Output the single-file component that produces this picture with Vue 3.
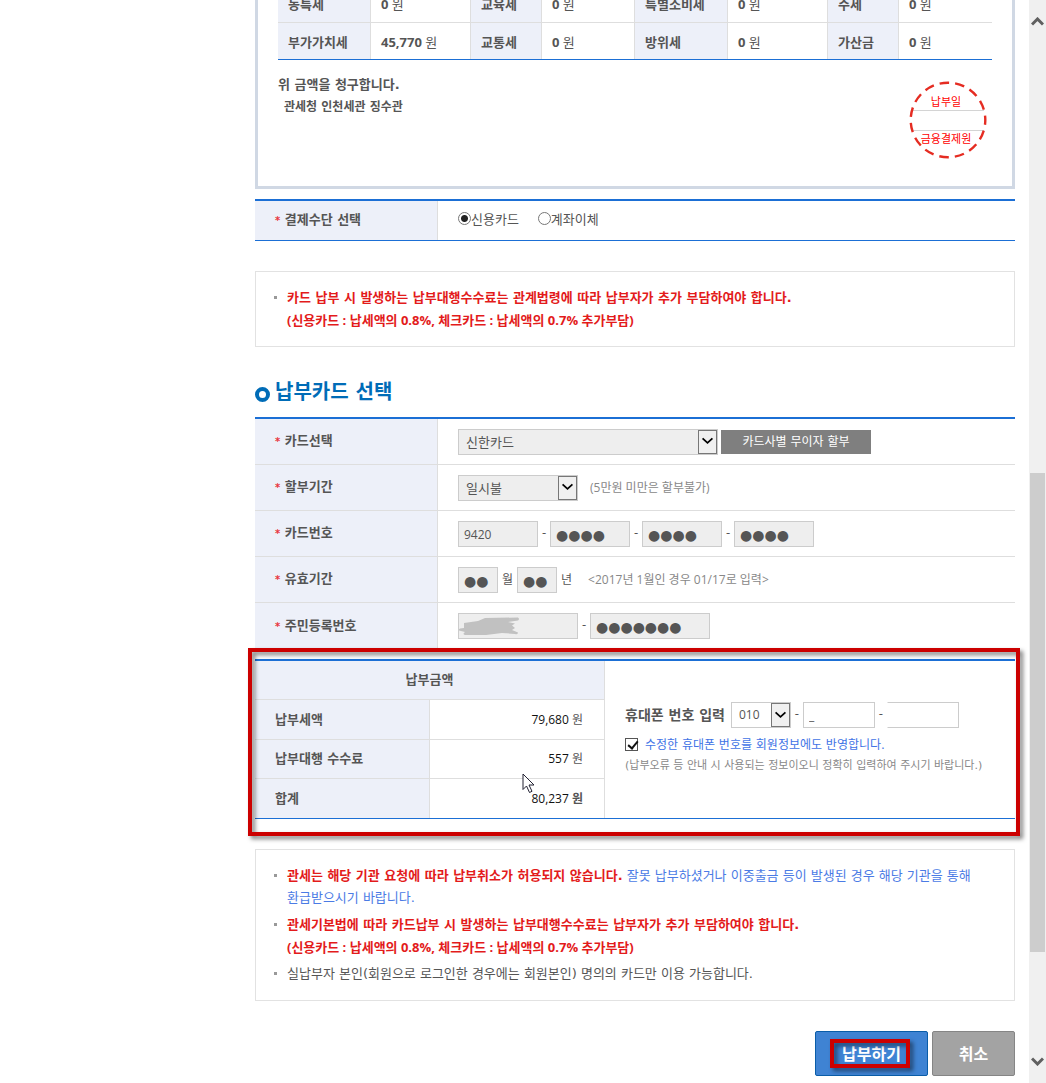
<script setup>
import { ref } from 'vue'

const taxRows = [
  [
    { name: '농특세', amount: '0' },
    { name: '교육세', amount: '0' },
    { name: '특별소비세', amount: '0' },
    { name: '주세', amount: '0' },
  ],
  [
    { name: '부가가치세', amount: '45,770' },
    { name: '교통세', amount: '0' },
    { name: '방위세', amount: '0' },
    { name: '가산금', amount: '0' },
  ],
]

const method = ref('card')
const cardCompany = ref('신한카드')
const installment = ref('일시불')
const cardNumber = ref(['9420', '●●●●', '●●●●', '●●●●'])
const expiryMonth = ref('●●')
const expiryYear = ref('●●')
const residentFront = ref('')
const residentBack = ref('●●●●●●●')
const phonePrefix = ref('010')
const phoneMiddle = ref('_')
const phoneLast = ref('')
const updateProfile = ref(true)
</script>

<template>
  <div class="page">
    <main class="content">
      <section class="sheet">
        <table class="taxes">
          <colgroup>
            <col class="c93"><col class="c100"><col class="c71"><col class="c93">
            <col class="c93"><col class="c100"><col class="c71"><col class="c93">
          </colgroup>
          <tbody>
            <tr v-for="(row, i) in taxRows" :key="i">
              <template v-for="tax in row" :key="tax.name">
                <th scope="row">{{ tax.name }}</th>
                <td><b>{{ tax.amount }}</b> 원</td>
              </template>
            </tr>
          </tbody>
        </table>
        <div class="claim">
          <div class="claim-text">
            <p>위 금액을 청구합니다.</p>
            <p class="office">관세청 인천세관 징수관</p>
          </div>
          <svg class="stamp" width="78" height="78" viewBox="0 0 78 78">
            <path d="M3 29.500H75M3 49.500H75" stroke="#d4d4d4" />
            <circle cx="39" cy="39" r="37.300" fill="none" stroke="#e52c22" stroke-width="2.400" stroke-dasharray="9.600 6.020" stroke-dashoffset="4.800" />
            <text x="37" y="25" text-anchor="middle">납부일</text>
            <text x="37" y="62" text-anchor="middle">금융결제원</text>
          </svg>
        </div>
      </section>

      <table class="form method">
        <tbody>
          <tr>
            <th scope="row"><i>*</i> 결제수단 선택</th>
            <td>
              <div class="line">
                <label class="choice"><input v-model="method" type="radio" name="method" value="card">신용카드</label>
                <label class="choice"><input v-model="method" type="radio" name="method" value="account">계좌이체</label>
              </div>
            </td>
          </tr>
        </tbody>
      </table>

      <ul class="notice">
        <li>
          <strong>카드 납부 시 발생하는 납부대행수수료는 관계법령에 따라 납부자가 추가 부담하여야 합니다.</strong>
          <strong class="rates">(신용카드 : 납세액의 0.8%, 체크카드 : 납세액의 0.7% 추가부담)</strong>
        </li>
      </ul>

      <h2><span class="ring"></span>납부카드 선택</h2>

      <table class="form">
        <tbody>
          <tr>
            <th scope="row"><i>*</i> <label for="company">카드선택</label></th>
            <td>
              <div class="line">
                <span class="pick w260">
                  <select id="company" v-model="cardCompany"><option>신한카드</option></select>
                  <svg width="19" height="24" viewBox="0 0 19 24"><path d="M4 8l5.500 5L15 8" /></svg>
                </span>
                <button type="button" class="free">카드사별 무이자 할부</button>
              </div>
            </td>
          </tr>
          <tr>
            <th scope="row"><i>*</i> <label for="months">할부기간</label></th>
            <td>
              <div class="line">
                <span class="pick w120">
                  <select id="months" v-model="installment"><option>일시불</option></select>
                  <svg width="19" height="24" viewBox="0 0 19 24"><path d="M4 8l5.500 5L15 8" /></svg>
                </span>
                <span class="hint">(5만원 미만은 할부불가)</span>
              </div>
            </td>
          </tr>
          <tr>
            <th scope="row"><i>*</i> <label for="number0">카드번호</label></th>
            <td>
              <div class="line">
                <template v-for="(part, i) in cardNumber" :key="i">
                  <span v-if="i > 0" class="dash">-</span>
                  <input :id="'number' + i" v-model="cardNumber[i]" class="box w80" :class="{ dots: i > 0 }" :aria-label="'카드번호 ' + (i + 1)">
                </template>
              </div>
            </td>
          </tr>
          <tr>
            <th scope="row"><i>*</i> <label for="month">유효기간</label></th>
            <td>
              <div class="line">
                <input id="month" v-model="expiryMonth" class="box dots w40">
                <label for="month" class="unit">월</label>
                <input id="year" v-model="expiryYear" class="box dots w40">
                <label for="year" class="unit">년</label>
                <span class="hint">&lt;2017년 1월인 경우 01/17로 입력&gt;</span>
              </div>
            </td>
          </tr>
          <tr>
            <th scope="row"><i>*</i> <label for="resident">주민등록번호</label></th>
            <td>
              <div class="line">
                <span class="masked">
                  <input id="resident" v-model="residentFront" class="box w120">
                  <svg class="scribble" width="62" height="20" viewBox="0 0 62 20">
                    <path d="M6 6L20 4L27 1L60 0.500Q62 2 60 3.500L50 5L57 6.500L54 8.500L57 11L54 13L60 15.500Q60 18 57 17L44 16L28 18L7 18Q4 17 7 15L1 13.500Q0 11 6 11Z" fill="#c1c1c1" />
                  </svg>
                </span>
                <span class="dash">-</span>
                <input v-model="residentBack" class="box dots w120" aria-label="주민등록번호 뒷자리">
              </div>
            </td>
          </tr>
        </tbody>
      </table>

      <section class="marked">
        <table class="amounts">
          <colgroup><col class="c175"><col class="c175"><col></colgroup>
          <tbody>
            <tr>
              <th scope="colgroup" colspan="2" class="head">납부금액</th>
              <td rowspan="4" class="phone">
                <div class="phone-body">
                  <div class="line">
                    <label for="prefix" class="phone-label">휴대폰 번호 입력</label>
                    <span class="pick white w60">
                      <select id="prefix" v-model="phonePrefix"><option>010</option></select>
                      <svg width="19" height="24" viewBox="0 0 19 24"><path d="M4 9l5.500 5L15 9" /></svg>
                    </span>
                    <span class="dash">-</span>
                    <input v-model="phoneMiddle" class="box white w72" aria-label="휴대폰 가운데 번호">
                    <span class="dash">-</span>
                    <input v-model="phoneLast" class="box white last w72" aria-label="휴대폰 끝 번호">
                  </div>
                  <label class="agree"><input v-model="updateProfile" type="checkbox">수정한 휴대폰 번호를 회원정보에도 반영합니다.</label>
                  <p class="fine">(납부오류 등 안내 시 사용되는 정보이오니 정확히 입력하여 주시기 바랍니다.)</p>
                </div>
              </td>
            </tr>
            <tr>
              <th scope="row">납부세액</th>
              <td class="sum"><span>79,680</span> 원</td>
            </tr>
            <tr>
              <th scope="row">납부대행 수수료</th>
              <td class="sum"><span>557</span> 원</td>
            </tr>
            <tr>
              <th scope="row">합계</th>
              <td class="sum"><span>80,237</span> <b>원</b>
                <svg class="pointer" width="14" height="22" viewBox="0 0 14 22"><path d="M1 1V16.500L4.500 13L7.500 19.500L10 18.300L7 12H12Z" fill="#fff" stroke="#223" stroke-width="1" /></svg>
              </td>
            </tr>
          </tbody>
        </table>
      </section>

      <ul class="notice">
        <li><strong>관세는 해당 기관 요청에 따라 납부취소가 허용되지 않습니다.</strong> <em>잘못 납부하셨거나 이중출금 등이 발생된 경우 해당 기관을 통해 환급받으시기 바랍니다.</em></li>
        <li>
          <strong>관세기본법에 따라 카드납부 시 발생하는 납부대행수수료는 납부자가 추가 부담하여야 합니다.</strong>
          <strong class="rates">(신용카드 : 납세액의 0.8%, 체크카드 : 납세액의 0.7% 추가부담)</strong>
        </li>
        <li>실납부자 본인(회원으로 로그인한 경우에는 회원본인) 명의의 카드만 이용 가능합니다.</li>
      </ul>

      <div class="actions">
        <button type="button" class="pay">납부하기</button>
        <button type="button" class="cancel">취소</button>
      </div>
    </main>

    <div class="scrollbar" aria-hidden="true">
      <div class="before"><svg width="13" height="9" viewBox="0 0 13 9"><path d="M1 7.500L6.500 2L12 7.500" /></svg></div>
      <div class="thumb"></div>
      <div class="after"><svg width="13" height="9" viewBox="0 0 13 9"><path d="M1 1.500L6.500 7L12 1.500" /></svg></div>
    </div>
  </div>
</template>

<style>
body {
  margin: 0;
  background: #fff;
}
</style>

<style scoped>
* {
  box-sizing: border-box;
}
.page {
  display: flex;
  min-height: 100vh;
  overflow: hidden;
  font: 13px/22px "Open Sans", "Noto Sans CJK KR", sans-serif;
  color: #555;
}
.claim-text, .form th, .amounts th, .notice, h2, .free, .phone-label, .agree, .fine {
  font-family: "DejaVu Sans", "Noto Sans CJK KR", sans-serif;
}
.content {
  flex: 1;
  min-width: 0;
  padding: 0 14px 7px 255px;
}
p, h2, ul {
  margin: 0;
  padding: 0;
}
i, em {
  font-style: normal;
}
input, select, button {
  margin: 0;
  font: inherit;
  color: inherit;
}
table {
  width: 100%;
  table-layout: fixed;
  border-collapse: separate;
  border-spacing: 0;
}
th, td {
  padding: 0;
  text-align: left;
}
th {
  background: #edf0f9;
  font-weight: bold;
}

.sheet {
  margin-top: -16px;
  padding: 0 20px 27px;
  border: 3px solid #d0d8e4;
  border-top: 0;
}
.taxes {
  border-bottom: 1px solid #1b6fd5;
}
.taxes th, .taxes td {
  height: 37px;
  padding: 2px 0 0 10px;
  border-right: 1px solid #dedede;
}
.taxes td:last-child {
  border-right: 0;
}
.taxes tr:first-child > * {
  height: 39px;
  border-bottom: 1px solid #dedede;
}
.taxes tr:last-child > * {
  height: 36px;
}
.c71 { width: 71px; }
.c93 { width: 93px; }
.c100 { width: 100px; }
.c175 { width: 175px; }
.claim {
  display: flex;
  justify-content: space-between;
  padding: 14px 5px 0 0;
  font-weight: bold;
}
.office {
  padding-left: 6px;
  font-size: 12px;
}
.stamp {
  margin-top: 7px;
  font-size: 11px;
  font-weight: normal;
  fill: #f00;
}

.form {
  border-top: 2px solid #1b6fd5;
}
.form th {
  width: 183px;
  padding-left: 20px;
  border-right: 1px solid #dedede;
}
.form th i {
  font-size: 10px;
  color: #e8343c;
}
.form td {
  height: 46px;
  padding-left: 20px;
}
.form tr:not(:last-child) > * {
  border-bottom: 1px solid #dedede;
}
.form.method {
  margin-top: 10px;
  border-bottom: 1px solid #1b6fd5;
}
.form.method td {
  height: 39px;
  padding-bottom: 4px;
}
.line {
  display: flex;
  align-items: center;
}
.choice {
  display: flex;
  align-items: center;
  margin-right: 19px;
}
.choice input {
  appearance: none;
  width: 13px;
  height: 13px;
  border: 1px solid #777;
  border-radius: 50%;
  background: #fff;
}
.choice input:checked {
  background: radial-gradient(circle, #222 3px, #fff 4px);
}

.notice {
  margin-top: 30px;
  padding: 15px 19px 15px 18px;
  border: 1px solid #e2e2e2;
  list-style: none;
  word-break: keep-all;
}
.notice li {
  display: block;
  position: relative;
  padding-left: 13px;
}
.notice li + li {
  margin-top: 5px;
}
.notice li::before {
  content: "";
  position: absolute;
  left: 0;
  top: 9px;
  width: 3px;
  height: 3px;
  background: #999;
}
.notice strong {
  color: #e31b1b;
}
.notice .rates {
  display: block;
  font-family: "Open Sans", "Noto Sans CJK KR", sans-serif;
}
.notice em {
  color: #4b7be5;
}

h2 {
  display: flex;
  align-items: center;
  gap: 5px;
  margin: 30px 0 10px;
  font-size: 20px;
  line-height: 30px;
  color: #006cb7;
}
.ring {
  width: 15px;
  height: 15px;
  margin-top: 4px;
  border: 4px solid #006cb7;
  border-radius: 50%;
}

.pick {
  display: flex;
  height: 26px;
  border: 1px solid #ccc;
  background: #eee;
}
.pick select {
  flex: 1;
  min-width: 0;
  appearance: none;
  padding: 0 7px;
  border: 0;
  background: transparent;
  outline: 0;
}
.pick svg {
  border: 1px solid #777;
  background: #f0f0f0;
}
.pick path {
  fill: none;
  stroke: #000;
  stroke-width: 2;
}
.box {
  height: 26px;
  padding: 2px 5px 0;
  border: 1px solid #ccc;
  border-radius: 0;
  background: #eee;
  font-size: 12px;
}
.box.dots {
  font-family: "DejaVu Sans", sans-serif;
  font-size: 14px;
}
.white {
  background: #fff;
}
.box.last {
  border-left-color: #fff;
}
.white select {
  font-size: 12px;
}
.w40 { width: 40px; }
.w60 { width: 60px; }
.w72 { width: 72px; }
.w80 { width: 80px; }
.w120 { width: 120px; }
.w260 { width: 260px; }
.dash {
  width: 12px;
  padding-bottom: 4px;
  text-align: center;
}
.unit {
  padding: 0 4px;
  font-size: 12px;
}
.hint {
  margin-left: 12px;
  font-size: 12px;
  color: #888;
}
.free {
  height: 24px;
  margin-left: 3px;
  padding: 0;
  width: 150px;
  border: 0;
  background: #7f7f7f;
  color: #fff;
  font-size: 12px;
}
.masked {
  display: flex;
  position: relative;
}
.scribble {
  position: absolute;
  left: 0;
  top: 4px;
}

.marked {
  position: relative;
  margin-top: 10px;
}
.marked::after {
  content: "";
  position: absolute;
  inset: -11px -5px -17px -7px;
  border: 4px solid #c00;
  filter: drop-shadow(3px 3px 2px rgba(0, 0, 0, 0.5));
  pointer-events: none;
}
.amounts {
  border-top: 2px solid #1b6fd5;
  border-bottom: 1px solid #1b6fd5;
}
.amounts th, .amounts .sum {
  height: 39px;
  border-right: 1px solid #dedede;
  border-bottom: 1px solid #dedede;
}
.amounts tr:nth-child(2) > * {
  height: 40px;
}
.amounts tr:last-child > * {
  border-bottom: 0;
}
.amounts th {
  padding-left: 20px;
}
.amounts .head {
  padding: 0;
  text-align: center;
}
.amounts .sum {
  position: relative;
  padding-right: 21px;
  text-align: right;
  font-size: 12px;
}
.sum span {
  color: #111;
}
.pointer {
  position: absolute;
  left: 92px;
  top: -6px;
}
.phone-body {
  display: flex;
  flex-direction: column;
  padding: 0 0 2px 20px;
}
.phone-label {
  margin-right: 6px;
  font-size: 14px;
  font-weight: bold;
}
.agree {
  display: flex;
  align-items: center;
  gap: 7px;
  margin-top: 6px;
  color: #4173e6;
  font-size: 12px;
}
.agree input {
  width: 13px;
  height: 13px;
  appearance: none;
  border: 1px solid #555;
  background: #fff;
}
.agree input:checked::before {
  content: "";
  display: block;
  width: 4px;
  height: 8px;
  margin: 0 0 0 4px;
  border: solid #111;
  border-width: 0 2px 2px 0;
  transform: rotate(40deg);
}
.fine {
  line-height: 20px;
  font-size: 11px;
  color: #888;
}

.actions {
  display: flex;
  justify-content: flex-end;
  gap: 4px;
  margin-top: 30px;
}
.actions button {
  height: 45px;
  border-radius: 2px;
  color: #fff;
  font-size: 16px;
  font-weight: bold;
}
.pay {
  position: relative;
  width: 113px;
  border: 1px solid #0a5da8;
  background: #3f83d3;
}
.pay::after {
  content: "";
  position: absolute;
  inset: 7px 17px 7px 14px;
  border: 4px solid #c00;
  filter: drop-shadow(3px 3px 2px rgba(0, 0, 0, 0.5));
}
.cancel {
  width: 83px;
  border: 1px solid #858585;
  background: #a3a3a3;
}

.scrollbar {
  display: flex;
  flex-direction: column;
  width: 17px;
  background: #f0f0f0;
}
.before, .after {
  display: flex;
  justify-content: center;
}
.before {
  flex: 473 0 0;
  align-items: flex-start;
}
.after {
  flex: 131 0 0;
  align-items: flex-end;
}
.scrollbar svg {
  margin: 17px 0;
}
.thumb {
  flex: 479 0 0;
  margin: 0 1px;
  background: #cdcdcd;
}
.scrollbar path {
  fill: none;
  stroke: #606060;
  stroke-width: 3;
}
</style>
